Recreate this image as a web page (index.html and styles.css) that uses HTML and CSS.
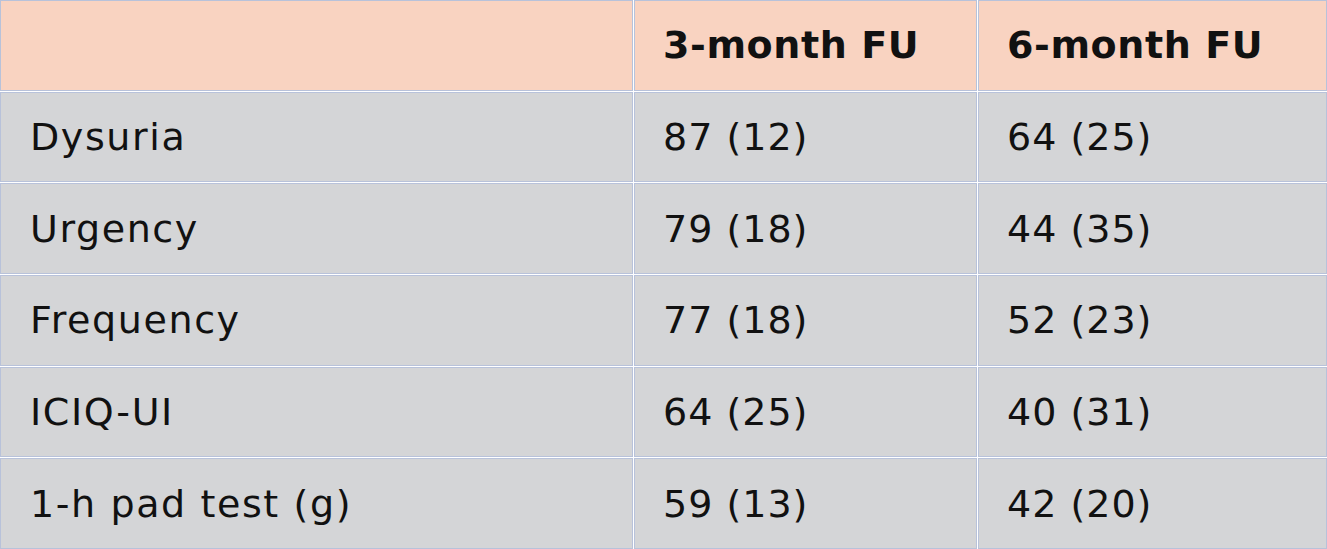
FILE: index.html
```html
<!DOCTYPE html>
<html>
<head>
<meta charset="utf-8">
<link rel="stylesheet" href="styles.css">
</head>
<body>
<div class="table">
  <div class="cell head"></div>
  <div class="cell head">3-month FU</div>
  <div class="cell head">6-month FU</div>

  <div class="cell label">Dysuria</div>
  <div class="cell">87 (12)</div>
  <div class="cell">64 (25)</div>

  <div class="cell label">Urgency</div>
  <div class="cell">79 (18)</div>
  <div class="cell">44 (35)</div>

  <div class="cell label">Frequency</div>
  <div class="cell">77 (18)</div>
  <div class="cell">52 (23)</div>

  <div class="cell label">ICIQ-UI</div>
  <div class="cell">64 (25)</div>
  <div class="cell">40 (31)</div>

  <div class="cell label">1-h pad test (g)</div>
  <div class="cell">59 (13)</div>
  <div class="cell">42 (20)</div>
</div>
</body>
</html>
```

FILE: styles.css
```css
html, body {
  margin: 0;
  padding: 0;
  background: #ffffff;
}

.table {
  width: 1327px;
  height: 549px;
  display: grid;
  grid-template-columns: 633px 343px 1fr;
  grid-template-rows: repeat(6, 1fr);
  gap: 1px;
  background: #ffffff;
  font-family: "DejaVu Sans", "Lato", sans-serif;
  font-size: 38px;
  letter-spacing: 1px;
  color: #111111;
}

.cell {
  background: #d4d5d7;
  border: 1px solid #b8c2da;
  display: flex;
  align-items: center;
  padding-left: 28px;
}

.cell:nth-child(3n+1) {
  padding-left: 29px;
}

.label {
  letter-spacing: 1.6px;
}

.head {
  background: #f9d3c1;
  font-weight: 700;
  letter-spacing: 0.6px;
}
```
